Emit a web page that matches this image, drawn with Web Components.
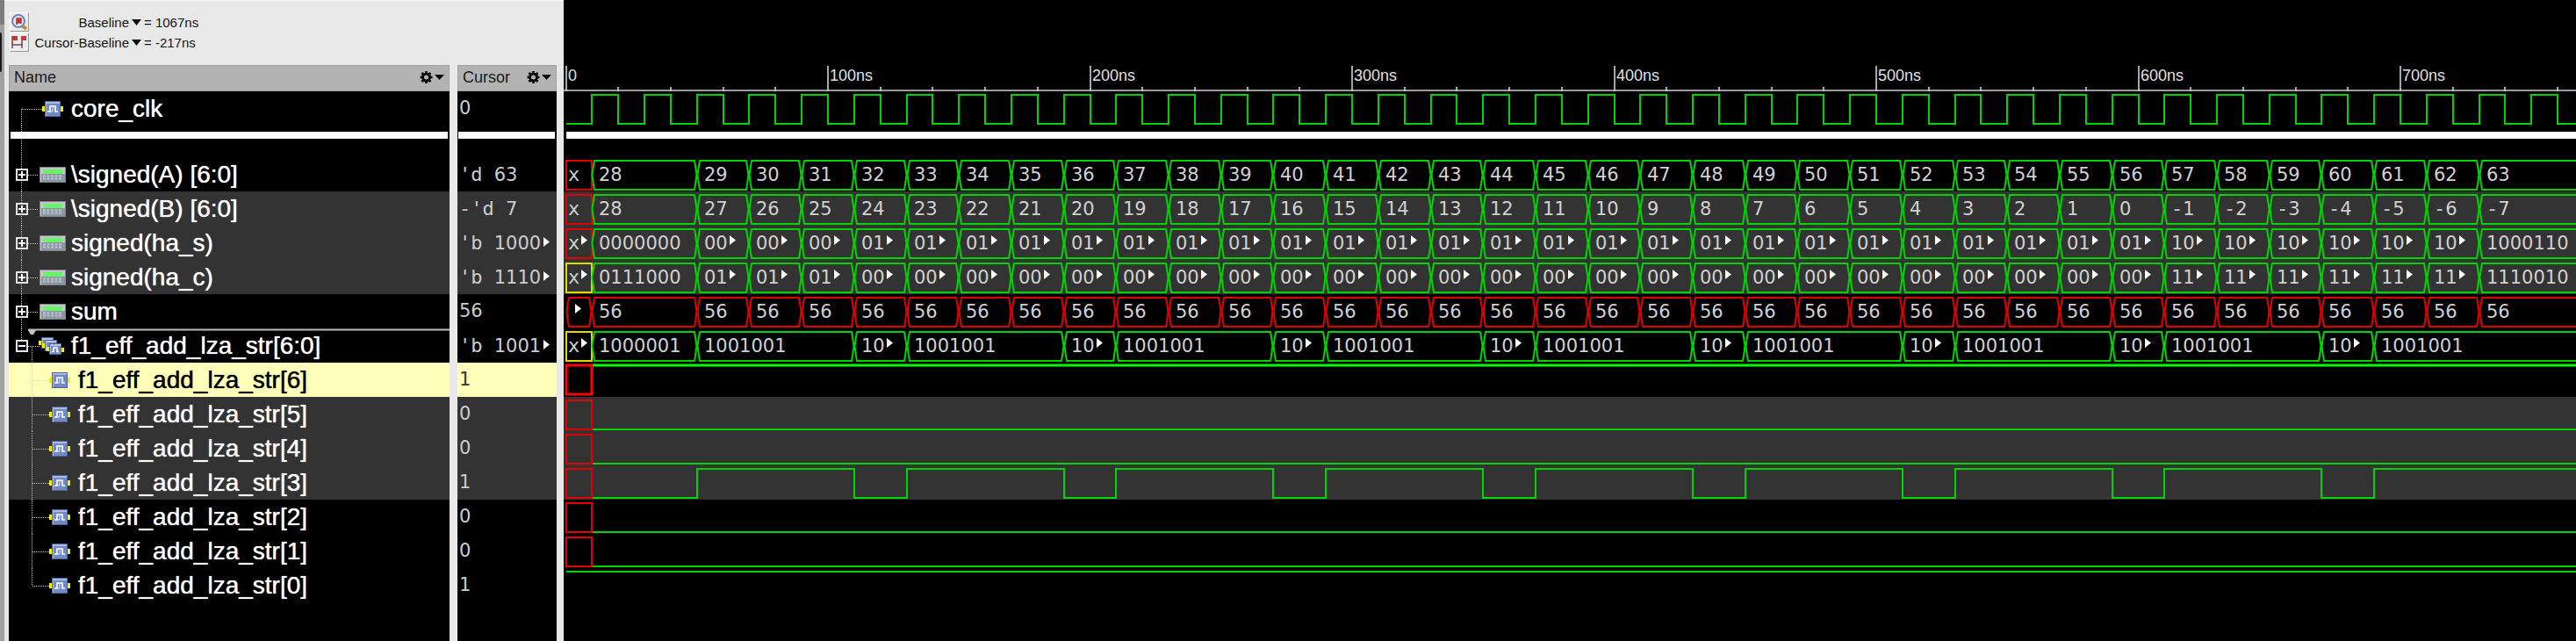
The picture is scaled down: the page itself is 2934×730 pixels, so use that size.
<!DOCTYPE html>
<html lang="en">
<head>
<meta charset="utf-8">
<title>Waveform</title>
<style>
  body { margin: 0; background: #000; font-family: "Liberation Sans", Arial, sans-serif; }
</style>
</head>
<body>
<wave-app></wave-app>
<script>
const NS = 2.985;          // horizontal pixels per nanosecond
const ORIGIN = 2.5;        // x of 0 ns inside a lane, before rounding
const END = 1000;
const X = t => Math.round(ORIGIN + t * NS);

const define = (name, css, render) => customElements.define(name, class extends HTMLElement {
  connectedCallback() {
    if (this.shadowRoot) return;
    this.attachShadow({ mode: 'open' }).innerHTML = `<style>*{box-sizing:border-box}${css}</style>${render(this)}`;
  }
});

// Digits use a plain-zero face; every other character sits on a fixed-pitch cell.
const cells = (text, tag) => text.split(/(\d+)/).filter(Boolean)
  .map(t => /\d/.test(t) ? t : `<${tag} class="m">${t}</${tag}>`).join('');

const bin = v => (v & 127).toString(2).padStart(7, '0');
const series = (f, color = 'g') => {
  const out = [{ from: 10, to: 50, text: f(28, 28), color }];
  for (let k = 0; k < 35; k++) {
    const from = 50 + 20 * k;
    out.push({ from, to: k === 34 ? END : from + 20, text: f(29 + k, 27 - k), color });
  }
  return out;
};
const unknown = (text, more, color = 'r') => ({ from: 0, to: 10, text, more, color, box: true });

const strSegs = [unknown('x', true, 'y'), { from: 10, to: 50, text: '1000001', color: 'g' }];
const bit3 = [[10, 0]];
for (let t = 50; t < 760; ) {
  const stop = t === 50 ? 110 : t === 690 ? END : t + 60;
  strSegs.push({ from: t, to: stop, text: '1001001', color: 'g' });
  bit3.push([t, 1]);
  if (stop === END) break;
  strSegs.push({ from: stop, to: stop + 20, text: '1000001', color: 'g' });
  bit3.push([stop, 0]);
  t = stop + 20;
}
const clock = [];
for (let t = 0; t < END; t += 10) clock.push([t, (t / 10) % 2]);

const SIGNALS = [
  { name: 'core_clk', kind: 'bit', value: '0', bits: clock },
  { gap: true },
  { name: '\\signed(A) [6:0]', kind: 'bus', value: "'d 63", segs: [unknown('x'), ...series(a => '' + a)] },
  { name: '\\signed(B) [6:0]', kind: 'bus', value: "-'d 7", shade: true, segs: [unknown('x'), ...series((a, b) => '' + b)] },
  { name: 'signed(ha_s)', kind: 'bus', value: "'b 1000", more: true, shade: true, segs: [unknown('x', true), ...series((a, b) => bin(a ^ b))] },
  { name: 'signed(ha_c)', kind: 'bus', value: "'b 1110", more: true, shade: true, segs: [unknown('x', true, 'y'), ...series((a, b) => bin((a & b) << 1))] },
  { name: 'sum', kind: 'bus', value: '56', segs: [{ from: 0, to: 10, text: '', more: true, color: 'r' }, ...series(() => '56', 'r')] },
  { name: 'f1_eff_add_lza_str[6:0]', kind: 'group', value: "'b 1001", more: true, segs: strSegs },
  { name: 'f1_eff_add_lza_str[6]', kind: 'bit', child: true, selected: true, value: '1', bits: [[10, 1]] },
  { name: 'f1_eff_add_lza_str[5]', kind: 'bit', child: true, shade: true, value: '0', bits: [[10, 0]] },
  { name: 'f1_eff_add_lza_str[4]', kind: 'bit', child: true, shade: true, value: '0', bits: [[10, 0]] },
  { name: 'f1_eff_add_lza_str[3]', kind: 'bit', child: true, shade: true, value: '1', bits: bit3 },
  { name: 'f1_eff_add_lza_str[2]', kind: 'bit', child: true, value: '0', bits: [[10, 0]] },
  { name: 'f1_eff_add_lza_str[1]', kind: 'bit', child: true, value: '0', bits: [[10, 0]] },
  { name: 'f1_eff_add_lza_str[0]', kind: 'bit', child: true, last: true, value: '1', bits: [[0, 1]] }
];

const ARROW = '<svg class="arrow" width="7" height="11" aria-hidden="true"><path d="M0 0L7 5.5L0 11Z" fill="#fff"/></svg>';

const bitTile = (x, y) => `<g transform="translate(${x} ${y})">
  <rect x="0" y="6" width="3" height="6" fill="#f2f200"/><rect x="21" y="6" width="3" height="6" fill="#f2f200"/>
  <rect x="3" y="0" width="18" height="18" fill="#4d6596"/><rect x="4" y="1" width="16" height="16" fill="#a9bbe2"/>
  <rect x="5" y="3" width="15" height="14" fill="#7189c4"/>
  <path d="M6 12H9V6H15V12H18" fill="none" stroke="#fff" stroke-width="1.6"/><path d="M12 7V12H9" fill="none" stroke="#dfe6f8" stroke-width="1"/></g>`;

const smallTile = (x, y, full) => `<g transform="translate(${x} ${y})"><rect x="-3" y="4" width="3" height="5" fill="#f2f200"/>
  <rect width="14" height="13" fill="#4d6596"/><rect x="1" y="1" width="12" height="11" fill="#b4c3e6"/><rect x="2" y="3" width="11" height="9" fill="#7189c4"/>
  ${full ? '<rect x="14" y="5" width="3" height="5" fill="#f2f200"/><path d="M3 9.500H5V5H9V9.500H11" fill="none" stroke="#fff" stroke-width="1.500"/>' : ''}</g>`;

const ICONS = {
  bit: bitTile(4, 1),
  bus: `<rect x="1" y="1" width="30" height="18" fill="#808488"/><rect x="2" y="2" width="28" height="16" fill="#c2c6cb"/>
    <rect x="3" y="9" width="27" height="9" fill="#8d97a5"/><rect x="5" y="4" width="22" height="5" fill="#66f566"/>
    <path d="M5 11.500H27M5 14.500H27" stroke="#bcc4cf" stroke-width="2" stroke-dasharray="3 1.500"/>`,
  group: smallTile(3, 0) + smallTile(7, 3) + smallTile(12, 7, true)
};

define('signal-icon', ':host{display:block;width:32px;height:20px}svg{display:block;overflow:visible}',
  el => `<svg width="32" height="20" aria-hidden="true">${ICONS[el.getAttribute('kind')]}</svg>`);

define('column-head', `
  :host{display:flex;align-items:center;height:30px;padding:0 5px 2px;background:#b3b3b3;border:1px solid #a2a2a2;color:#1a1a1a;font-size:18px;line-height:26px}
  ::slotted(*){flex:1}
  button{display:flex;align-items:center;padding:0;border:0;background:none}`,
  () => `<slot></slot><button aria-label="Column options"><svg width="28" height="16" aria-hidden="true">
    <g fill="none" stroke="#0a0a0a"><circle cx="7.500" cy="8" r="4" stroke-width="3"/><path d="M7.500 1V4M7.500 12V15M.5 8H3.500M11.500 8H14.500M2.500 3L4.600 5.100M10.400 10.900L12.500 13M2.500 13L4.600 10.900M10.400 5.100L12.500 3" stroke-width="2.600"/></g>
    <path d="M17 5H28L22.500 11Z" fill="#0a0a0a"/></svg></button>`);

define('signal-row', `
  :host{display:flex;align-items:center;height:39px;color:#fff;font-size:28px;line-height:39px;white-space:nowrap}
  :host([shade]){background:#333}
  :host([selected]){background:#ffffb9;color:#000}
  :host([gap]){height:36px}
  .tree{display:grid;width:34px;align-items:center}
  .tree>*{grid-area:1/1}
  :host([child]) .tree{width:42px}
  .tree svg{display:block;overflow:visible}
  .rule{width:100%}
  button{width:14px;height:14px;margin-left:8px;padding:0;border:2px solid #e2e2e2;background:#000;z-index:1}
  :host([shade]) button{background:#333}
  .name{margin-left:5px;text-shadow:0 0 1px currentColor}`,
  el => {
    const on = a => el.hasAttribute(a), kind = el.getAttribute('kind');
    const dot = d => `<path d="${d}" stroke="${on('selected') ? '#d8d8b0' : '#c4c4c4'}" stroke-dasharray="1 1" fill="none"/>`;
    if (on('gap')) return `<div class="tree rule"><svg width="100%" height="36" aria-hidden="true">${dot('M14.500 0V36')}<rect x="2" y="7" width="498" height="8" fill="#fffcfc"/></svg></div>`;
    let lines;
    if (on('child')) lines = dot(`M26.500 0V${on('last') ? 20 : 39}`) + dot('M27 20.500H46');
    else if (kind === 'bit') lines = dot('M14.500 20V39') + dot('M15 20.500H38');
    else if (kind === 'bus') lines = dot('M14.500 0V39') + dot('M22 20.500H34');
    else lines = dot('M14.500 0V14') + dot('M22 20.500H36') + dot('M26.500 21V39')
      + '<path d="M22 1.500H502" stroke="#bcbcbc" stroke-width="2"/><path d="M22 2H31L28 7H25Z" fill="#c4c4c4"/>';
    const plus = kind === 'bus', box = plus || kind === 'group'
      ? `<button aria-label="${plus ? 'Expand' : 'Collapse'}"><svg width="10" height="10" aria-hidden="true"><path d="M1 5H9${plus ? 'M5 1V9' : ''}" stroke="#fff" stroke-width="2"/></svg></button>` : '';
    return `<div class="tree"><svg width="34" height="39" aria-hidden="true">${lines}</svg>${box}</div>
      <signal-icon kind="${kind}"></signal-icon><span class="name"><slot></slot></span>`;
  });

define('value-cell', `
  :host{display:flex;height:39px;padding-left:2px;color:#ccc;font:21px/39px "DejaVu Sans",sans-serif;white-space:pre}
  :host([shade]){background:#333}
  :host([selected]){background:#ffffb9;color:#333}
  :host([gap]){height:36px;padding:7px 2px 21px 1px}
  .bar{flex:1;background:#fffcfc}
  .m{font:22px/39px "DejaVu Sans Mono",monospace}
  .arrow{margin:13px 0 0 3px}`,
  el => el.hasAttribute('gap') ? '<div class="bar"></div>'
    : `<span>${cells(el.getAttribute('value'), 'span')}</span>${el.hasAttribute('more') ? ARROW : ''}`);

define('wave-ruler', `
  :host{display:block;height:104px}
  svg{display:block;width:100%;height:100%}
  text{font:18px "Liberation Sans",Arial,sans-serif;fill:#e0e0e0}`,
  () => {
    let ticks = '', labels = '';
    for (let t = 0; t <= END; t += 20) {
      const x = X(t), major = t % 100 === 0;
      ticks += `M${x} ${major ? 75 : 99}V104`;
      if (major && t < 770) labels += `<text x="${x + 2}" y="92">${t ? t + 'ns' : '0'}</text>`;
    }
    return `<svg><path d="${ticks}" stroke="#ddd" stroke-width="1.500"/><path d="M0 103H9999" stroke="#ccc" stroke-width="1.500"/>${labels}</svg>`;
  });

define('wave-lane', `
  :host{display:block;height:39px}
  :host([shade]){background:#333}
  :host([gap]){height:36px}
  svg{display:block;width:100%;height:100%}
  path{fill:none;stroke-width:2}
  .thick path{stroke-width:3}
  .g{stroke:#00d400}.r{stroke:#e00000}.y{stroke:#e0d800}
  .thick .g{stroke:#0f0}.thick .r{stroke:#f00}
  text{font:21px "DejaVu Sans",sans-serif;fill:#d0d0d0;white-space:pre}
  .m{font:22px "DejaVu Sans Mono",monospace}
  .more{fill:#fff}`,
  el => {
    const s = SIGNALS[+el.getAttribute('index')];
    const hi = s.selected ? 3 : 4, lo = s.selected ? 36 : 37, mid = 20;
    if (s.gap) return '<svg><rect x="3" y="7" width="100%" height="8" fill="#fff"/></svg>';
    let out = '';
    if (s.bits) {
      const start = s.bits[0][0];
      let d = '';
      s.bits.forEach(([t, v], i) => { d += (i ? 'H' : 'M') + X(t) + (i ? 'V' : ' ') + (v ? hi : lo); });
      out += `<path class="g" d="${d}H${X(END)}"/>`;
      if (start) out += `<path class="r" d="M${X(0)} ${hi}H${X(10)}V${lo}H${X(0)}Z"/>`;
    } else {
      for (const g of s.segs) {
        const a = X(g.from), b = X(g.to);
        let { text, more } = g;
        const room = g.to - g.from <= 20 ? 2 : 9;
        if (text.length > room) { more = true; text = text.slice(0, room); }
        out += g.box ? `<path class="${g.color}" d="M${a} ${hi}H${b}V${lo}H${a}Z"/>`
          : `<path class="${g.color}" stroke-linejoin="round" d="M${a + 3} ${hi}H${b - 3}L${b - 2} ${hi + 6}L${b - .5} ${mid}L${b - 2} ${lo - 6}L${b - 3} ${lo}H${a + 3}L${a + 2} ${lo - 6}L${a + .5} ${mid}L${a + 2} ${hi + 6}Z"/>`;
        if (text) out += `<text x="${a + (g.box ? 2 : 8)}" y="27">${cells(text, 'tspan')}</text>`;
        if (more) {
          const mx = a + (g.box ? 17 : text ? 37 : 10);
          out += `<polygon class="more" points="${mx},11 ${mx + 7},16.500 ${mx},22"/>`;
        }
      }
    }
    return `<svg class="${s.selected ? 'thick' : ''}">${out}</svg>`;
  });

define('tool-bar', `
  :host{display:grid;grid-template-columns:22px 113px auto;justify-content:start;align-content:start;column-gap:1px;height:74px;padding:13px 0 0 1px;color:#151515;font-size:15px}
  button{font:inherit;color:inherit;border:0;background:none;padding:0;height:23px;line-height:23px}
  .icon{width:22px;height:22px;background:#ececec;border:1px solid;border-color:#fff #999 #999 #fff}
  .icon svg{display:block}
  .pick{display:flex;justify-content:flex-end;align-items:center;white-space:nowrap}
  .val{display:flex;align-items:center;gap:3px;line-height:23px;padding-left:2px}`,
  () => {
    const tri = '<svg width="11" height="7" aria-hidden="true"><path d="M0 0H11L5.500 7Z" fill="#111"/></svg>';
    return `<button class="icon" aria-label="Zoom to baseline"><svg width="20" height="20"><path d="M13 14L18 18" stroke="#c98b2e" stroke-width="4"/><circle cx="9" cy="9" r="7" fill="#dde5f5" stroke="#7088b8" stroke-width="2"/><path d="M7 13V6H12V11H7" fill="#b83a3a" stroke="#b83a3a" stroke-width="1.500"/></svg></button>
      <button class="pick">Baseline</button><span class="val">${tri}<span>= 1067ns</span></span>
      <button class="icon" aria-label="Cursor to baseline"><svg width="20" height="20"><path d="M2 3V17M13 3V17" stroke="#9a3a3a" stroke-width="1.500"/><path d="M2 3H8V8H2ZM12 3H18V8H12Z" fill="#c23a3a"/><path d="M2 13H14" stroke="#555" stroke-width="1.500"/></svg></button>
      <button class="pick">Cursor-Baseline</button><span class="val">${tri}<span>= -217ns</span></span>`;
  });

define('wave-app', `
  :host{display:grid;grid-template-columns:5px 637px minmax(0,1fr);min-height:100vh;overflow:hidden;background:#000}
  .edge{background:linear-gradient(#7d7d7d 28px,#a2a2a2 28px)}
  .edge i{display:block;width:2px;height:45px;margin-top:37px;background:#1a1a1a;border-radius:0 2px 2px 0}
  .side{display:grid;grid-template-rows:73px 1fr;grid-template-columns:502px 113px;column-gap:9px;padding:0 8px 0 5px;background:#e8e8e8;border-top:1px solid #f6f6f6}
  tool-bar{grid-column:1/-1}
  .col{background:#000}`,
  () => {
    const flags = s => ['shade', 'selected', 'gap', 'child', 'last', 'more'].filter(f => s[f]).join(' ');
    return `<div class="edge"><i></i></div>
      <section class="side"><tool-bar></tool-bar>
        <div class="col"><column-head><span>Name</span></column-head>
          ${SIGNALS.map(s => `<signal-row kind="${s.kind || ''}" ${flags(s)}>${s.name || ''}</signal-row>`).join('')}</div>
        <div class="col"><column-head><span>Cursor</span></column-head>
          ${SIGNALS.map(s => `<value-cell value="${s.value || ''}" ${flags(s)}></value-cell>`).join('')}</div>
      </section>
      <main><wave-ruler></wave-ruler>${SIGNALS.map((s, i) => `<wave-lane index="${i}" ${flags(s)}></wave-lane>`).join('')}</main>`;
  });
</script>
</body>
</html>
